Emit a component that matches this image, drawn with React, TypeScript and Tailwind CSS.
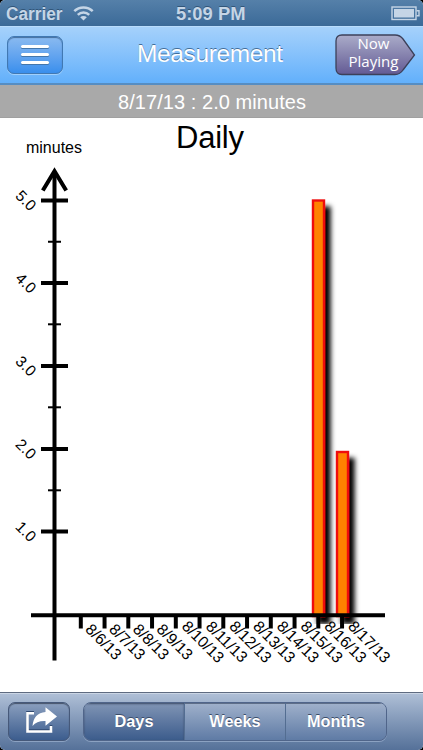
import type { ReactNode } from "react";

const HELVETICA = "font-['Liberation_Sans',Arial,sans-serif]";

const yTicks = [
  { label: "5.0", y: 200.5 },
  { label: "4.0", y: 283 },
  { label: "3.0", y: 366 },
  { label: "2.0", y: 449 },
  { label: "1.0", y: 531.5 },
];

const dates = [
  "8/6/13",
  "8/7/13",
  "8/8/13",
  "8/9/13",
  "8/10/13",
  "8/11/13",
  "8/12/13",
  "8/13/13",
  "8/14/13",
  "8/15/13",
  "8/16/13",
  "8/17/13",
];

const bars = [
  { x: 313, y: 200.5 },
  { x: 337, y: 452 },
];

const tickX = (index: number) => 80.8 + index * 23.75;

function StatusBar() {
  return (
    <div className="grid h-[26px] shrink-0 grid-cols-3 items-center bg-linear-to-b from-[#5580a9] to-[#3b6a98] text-[#c5d5e6]">
      <div className="flex items-center gap-[5px] pl-[4px]">
        <svg width="64" height="26" className="block font-bold [text-shadow:0_-1px_0_#315578]">
          <text x="2" y="19.5" fontSize="18" textLength="56.5" lengthAdjust="spacingAndGlyphs" fill="currentColor">
            Carrier
          </text>
        </svg>
        <svg width="21" height="16" viewBox="0 0 21 16" fill="none" stroke="currentColor" strokeWidth="2.5">
          <path d="M1.3 6.2a13 13 0 0 1 18.4 0" />
          <path d="M4.8 9.8a8.1 8.1 0 0 1 11.4 0" />
          <path d="M7.2 12.3a4.7 4.7 0 0 1 6.6 0L10.5 15.6Z" fill="currentColor" stroke="none" />
        </svg>
      </div>
      <svg width="74" height="26" className="mx-auto block font-bold [text-shadow:0_-1px_0_#315578]">
        <text x="1" y="19.5" fontSize="18" textLength="69.5" lengthAdjust="spacingAndGlyphs" fill="currentColor">
          5:09 PM
        </text>
      </svg>
      <svg width="29" height="15" viewBox="0 0 29 15" className="mr-[3px] justify-self-end">
        <rect x="1" y="1" width="24" height="12.5" fill="none" stroke="currentColor" strokeWidth="1.4" />
        <rect x="3" y="3" width="20" height="8.5" fill="currentColor" />
        <path d="M25.5 4.8H28v5h-2.5" fill="none" stroke="currentColor" strokeWidth="1.4" />
      </svg>
    </div>
  );
}

function NavBar() {
  return (
    <header className="flex h-[59px] shrink-0 items-center border-t border-[#b9dcfc] border-b-2 border-b-[#568dc2] bg-linear-to-b from-[#a5d1fb] to-[#62b0fb] px-[7px]">
      <button
        aria-label="Menu"
        className="mb-px flex h-[38px] w-[56px] flex-col items-center justify-center gap-[5px] rounded-[7px] border border-[#4178b2] bg-linear-to-b from-[#8abaf0] to-[#398fed] shadow-[inset_0_1px_1px_#456f9e,0_1px_0_#a1d0fc]"
      >
        <i className="h-[3px] w-[28px] rounded-sm bg-white shadow-[0_1px_0_#4376ac]" />
        <i className="h-[3px] w-[28px] rounded-sm bg-white shadow-[0_1px_0_#4376ac]" />
        <i className="h-[3px] w-[28px] rounded-sm bg-white shadow-[0_1px_0_#4376ac]" />
      </button>
      <svg width="152" height="40" className="ml-[72px] [text-shadow:0_-1px_0_#426d99]">
        <text x="2" y="27" fontSize="24.5" textLength="146" fill="white">
          Measurement
        </text>
      </svg>
      <svg width="82" height="44" viewBox="0 0 82 44" className="ml-auto font-['Open_Sans',sans-serif]">
        <defs>
          <linearGradient id="playing" x2="0" y2="1">
            <stop stopColor="#aaacc9" />
            <stop offset="1" stopColor="#635a94" />
          </linearGradient>
        </defs>
        <path
          d="M8 2H61Q66 2 69 6L80.5 22L69 37Q66 41.5 61 41.5H8Q2 41.5 2 35V8Q2 2 8 2Z"
          fill="url(#playing)"
          stroke="#3c4059"
          strokeWidth="1.3"
        />
        <text x="39.5" y="15.8" textAnchor="middle" fontSize="14.5" textLength="32" lengthAdjust="spacingAndGlyphs" fill="white">
          Now
        </text>
        <text x="39.5" y="34.3" textAnchor="middle" fontSize="14.5" textLength="50" lengthAdjust="spacingAndGlyphs" fill="white">
          Playing
        </text>
      </svg>
    </header>
  );
}

function Chart() {
  return (
    <svg width="423" height="574" viewBox="0 118 423 574" className="block shrink-0 bg-white">
      <defs>
        <filter id="barShadow" x="300" y="180" width="80" height="460" filterUnits="userSpaceOnUse">
          <feDropShadow dx="5.5" dy="7" stdDeviation="2.8" floodColor="#000" floodOpacity="1" />
        </filter>
        <clipPath id="plot">
          <rect x="0" y="118" width="423" height="506" />
        </clipPath>
      </defs>

      <text x="176" y="147.5" fontSize="31" textLength="68">
        Daily
      </text>
      <text x="26" y="153" fontSize="16" textLength="56">
        minutes
      </text>

      <g clipPath="url(#plot)">
        {bars.map((bar) => (
          <rect
            key={bar.x}
            x={bar.x}
            y={bar.y}
            width="11"
            height={616 - bar.y}
            fill="#ff8200"
            stroke="#ef100c"
            strokeWidth="2.4"
            filter="url(#barShadow)"
          />
        ))}
      </g>

      <g stroke="#000" strokeWidth="4" fill="none">
        <path d="M54.5 172V660.5M31 615.3H385" />
        <path d="M42.8 190.5L54.5 171.2L66.2 190.5" />
        {yTicks.map((tick) => (
          <path key={tick.label} d={`M41 ${tick.y}H68`} />
        ))}
        {yTicks.slice(0, 4).map((tick) => (
          <path key={tick.label} d={`M48 ${tick.y + 41.3}H61`} strokeWidth="2" />
        ))}
        {dates.map((date, i) => (
          <path key={date} d={`M${tickX(i)} 615V628.5`} />
        ))}
      </g>

      {yTicks.map((tick) => (
        <text
          key={tick.label}
          transform={`translate(26 ${tick.y}) rotate(45)`}
          y="5.3"
          fontSize="15.5"
          textAnchor="middle"
        >
          {tick.label}
        </text>
      ))}
      {dates.map((date, i) => (
        <text
          key={date}
          transform={`translate(${tickX(i) + (date.length > 6 ? 27.3 : 22.9)} 641.7) rotate(45)`}
          y="5.4"
          fontSize="15.6"
          textAnchor="middle"
        >
          {date}
        </text>
      ))}
    </svg>
  );
}

function Segment({ children, active }: { children: ReactNode; active?: boolean }) {
  return (
    <button
      className={`flex-1 border-r border-[#536d91] text-[16.3px] font-bold text-white [text-shadow:0_-1px_0_#3b4d69] last:border-r-0 ${
        active
          ? "bg-linear-to-b from-[#8195b5] to-[#3c5c8c] shadow-[inset_0_1px_2px_#3b4b66]"
          : "bg-linear-to-b from-[#a0b1cb] to-[#5f7ba5] shadow-[inset_0_1px_0_#5e6e88]"
      }`}
    >
      {children}
    </button>
  );
}

function Toolbar() {
  return (
    <footer className="flex h-[58px] shrink-0 items-center gap-[13px] border-t border-[#5e6b80] bg-linear-to-b from-[#b0c0d7] to-[#557199] pl-[8px] shadow-[inset_0_1px_0_#cad5e4]">
      <button
        aria-label="Share"
        className="grid h-[39px] w-[62px] place-items-center rounded-[7px] border border-[#46597a] bg-linear-to-b from-[#8b9fbe] to-[#3c5d8e] shadow-[inset_0_1px_1px_#46546b,0_1px_0_#8ca2c2]"
      >
        <svg width="34" height="28" viewBox="0 0 34 28" className="mt-[-4px] ml-[3px]">
          <path d="M10 7.3H3.5V25.5H27V20" fill="none" stroke="#314a70" strokeWidth="2.6" transform="translate(0 -1)" />
          <path d="M10 7.3H3.5V25.5H27V20" fill="none" stroke="white" strokeWidth="2.6" />
          <path d="M21.5 1.2L33 10.5L21.5 19.8V15Q13 14.5 8.5 20Q9.5 7 21.5 6Z" fill="white" />
        </svg>
      </button>
      <div className="flex h-[39px] w-[304px] overflow-hidden rounded-[8px] border border-[#50658a] shadow-[0_1px_0_#8ca2c2]">
        <Segment active>Days</Segment>
        <Segment>Weeks</Segment>
        <Segment>Months</Segment>
      </div>
    </footer>
  );
}

export default function App() {
  return (
    <div className={`flex h-[750px] w-[423px] flex-col overflow-hidden bg-black ${HELVETICA}`}>
      <div className="flex h-full flex-col overflow-hidden rounded-[5px] bg-white">
        <StatusBar />
        <NavBar />
        <div className="flex h-[33px] shrink-0 items-center justify-center border-b border-[#a0a0a0] bg-[#a9a9a9] text-white">
          <svg width="190" height="32">
            <text x="1" y="23.5" fontSize="20" textLength="188" fill="currentColor">
              8/17/13 : 2.0 minutes
            </text>
          </svg>
        </div>
        <Chart />
        <Toolbar />
      </div>
    </div>
  );
}
